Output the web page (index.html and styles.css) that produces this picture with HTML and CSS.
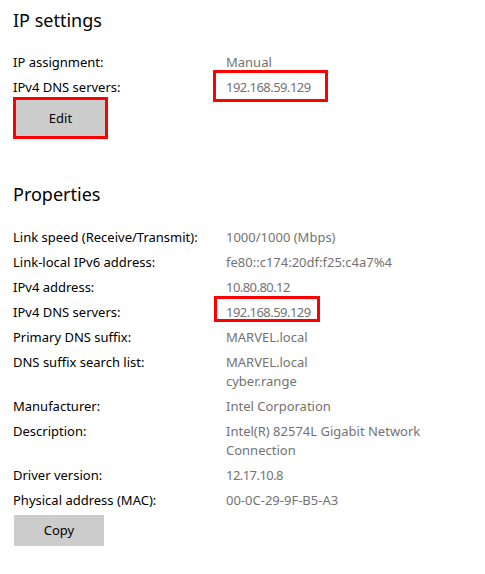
FILE: index.html
```html
<!DOCTYPE html>
<html lang="en">
<head>
<meta charset="utf-8">
<title>IP settings</title>
<link rel="stylesheet" href="styles.css">
</head>
<body>
<main class="page">
  <section class="ip-settings">
    <h2 class="section-title first">IP settings</h2>
    <dl class="props ip-props">
      <dt>IP assignment:</dt>
      <dd>Manual</dd>
      <dt>IPv4 DNS servers:</dt>
      <dd><span class="mark mark-a num">192.168.59.129</span></dd>
    </dl>
    <div class="edit-wrap"><button class="btn edit-btn" type="button">Edit</button></div>
  </section>

  <section class="properties">
    <h2 class="section-title second">Properties</h2>
    <dl class="props">
      <dt>Link speed (Receive/Transmit):</dt>
      <dd>1000/1000 (Mbps)</dd>
      <dt>Link-local IPv6 address:</dt>
      <dd>fe80::c174:20df:f25:c4a7%4</dd>
      <dt>IPv4 address:</dt>
      <dd class="num">10.80.80.12</dd>
      <dt>IPv4 DNS servers:</dt>
      <dd><span class="mark mark-b num">192.168.59.129</span></dd>
      <dt>Primary DNS suffix:</dt>
      <dd>MARVEL.local</dd>
      <dt>DNS suffix search list:</dt>
      <dd>MARVEL.local<br>cyber.range</dd>
      <dt>Manufacturer:</dt>
      <dd>Intel Corporation</dd>
      <dt>Description:</dt>
      <dd>Intel(R) 82574L Gigabit Network<br>Connection</dd>
      <dt>Driver version:</dt>
      <dd class="num">12.17.10.8</dd>
      <dt>Physical address (MAC):</dt>
      <dd>00-0C-29-9F-B5-A3</dd>
    </dl>
    <button class="btn copy-btn" type="button">Copy</button>
  </section>
</main>
</body>
</html>
```

FILE: styles.css
```css
html, body {
  margin: 0;
  padding: 0;
  background: #ffffff;
}

body {
  font-family: "Noto Sans", "Open Sans", sans-serif;
  font-size: 13px;
  color: #000000;
}

.page {
  padding-left: 13px;
}

.section-title {
  margin: 0;
  font-size: 18px;
  font-weight: 400;
  line-height: 28px;
}

.section-title.first {
  padding-top: 6px;
}

.section-title.second {
  margin-top: 41px;
}

.props {
  display: grid;
  grid-template-columns: 213px auto;
  row-gap: 6px;
  margin: 19px 0 0 0;
  line-height: 19px;
}

.properties .props {
  margin-top: 20px;
}

.props dt,
.props dd {
  margin: 0;
}

.props dd {
  color: #737373;
}

.num {
  letter-spacing: -0.55px;
}

.mark {
  position: relative;
  display: inline-block;
}

.mark::after {
  content: "";
  position: absolute;
  border: 3px solid #ff0000;
  box-sizing: border-box;
}

.mark-a::after {
  left: -13px;
  top: -8px;
  width: 115px;
  height: 32px;
}

.mark-b::after {
  left: -12px;
  top: -7px;
  width: 106px;
  height: 26px;
}

.btn {
  font-family: inherit;
  font-size: 13px;
  color: #000000;
  background: #cccccc;
  border: none;
  border-radius: 0;
  padding: 0;
  margin: 0;
}

.edit-wrap {
  display: inline-block;
  border: 3px solid #ff0000;
  line-height: 0;
}

.edit-btn {
  width: 89px;
  height: 36px;
  line-height: 19px;
}

.copy-btn {
  display: block;
  width: 90px;
  height: 31px;
  margin: 5px 0 0 1px;
  line-height: 19px;
}
```
